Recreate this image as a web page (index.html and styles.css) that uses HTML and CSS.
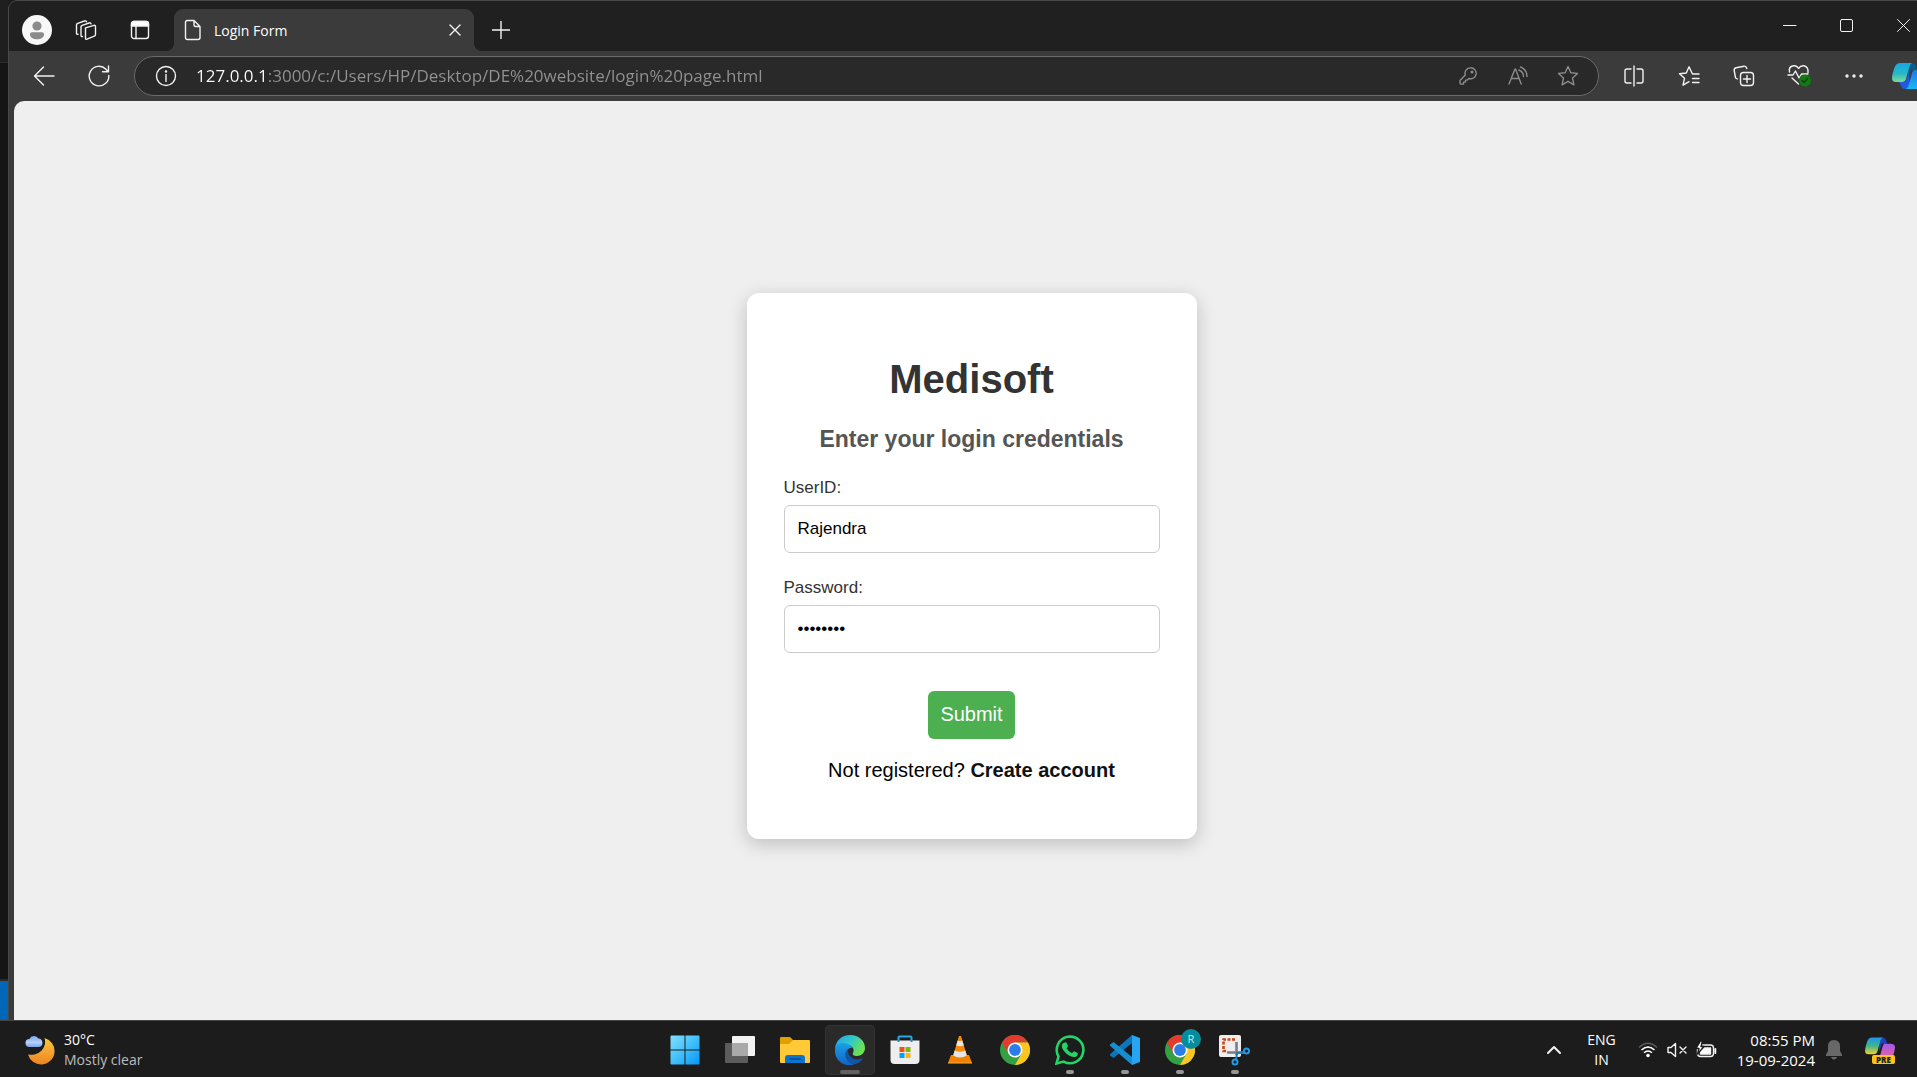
FILE: index.html
```html
<!DOCTYPE html>
<html lang="en">
<head>
<meta charset="utf-8">
<meta name="viewport" content="width=device-width, initial-scale=1">
<title>Login Form</title>
<link rel="stylesheet" href="styles.css">
</head>
<body>
<div class="desktop">
  <div class="backdrop"><div class="backdrop-top"></div><div class="backdrop-mid"></div><div class="backdrop-status"></div></div>
  <div class="window">
    <header class="tabbar">
      <button class="avatar" aria-label="Profile">
        <svg width="30" height="30" viewBox="0 0 30 30"><circle cx="15" cy="15" r="15" fill="#f8f8f8"/><circle cx="15" cy="11" r="4.6" fill="#8b8b8b"/><path d="M8 19.2c0-1.100.9-2 2-2h10c1.100 0 2 .9 2 2 0 3.200-3 5-7 5s-7-1.800-7-5z" fill="#8b8b8b"/></svg>
      </button>
      <button class="icon-btn" aria-label="Workspaces">
        <svg width="22" height="22" viewBox="0 0 22 22" class="line"><path d="M10.500 8.800 19 6.300q1.500-.3 1.500 1.200v8q0 1.200-1.200 1.700l-7.300 3q-1.500.5-1.500-1z"/><path d="M7.500 17.500q-1.500.4-1.500-1.200V8q0-1.300 1.200-1.700L14 4q1.700-.5 2 .8"/><path d="M3 15.300q-1.500.3-1.500-1.200V6q0-1.300 1.200-1.700L9.500 2q1.600-.5 2 .8"/></svg>
      </button>
      <button class="icon-btn" aria-label="Tab actions">
        <svg width="20" height="20" viewBox="0 0 20 20" class="line"><rect x="1.500" y="1.500" width="17" height="17" rx="2.500"/><path d="M1.500 4q0-2.500 2.500-2.500h12q2.500 0 2.500 2.500v2h-17z" fill="#fff"/><path d="M6 6v12"/></svg>
      </button>
      <div class="tab">
        <svg width="18" height="22" viewBox="0 0 18 22" class="line"><path d="M3.500 1.500H10l6 6v11q0 2-2 2H3.500q-2 0-2-2v-15q0-2 2-2zM10 1.500v4.500q0 1.500 1.500 1.500H16"/></svg>
        <span class="tab-title">Login Form</span>
        <button class="tab-close" aria-label="Close tab"><svg width="12" height="12" viewBox="0 0 12 12" class="line"><path d="M1 1l10 10M11 1 1 11"/></svg></button>
      </div>
      <button class="new-tab" aria-label="New tab"><svg width="18" height="18" viewBox="0 0 18 18" class="line"><path d="M9 0v18M0 9h18"/></svg></button>
      <div class="window-controls">
        <button aria-label="Minimize"><svg width="14" height="14" viewBox="0 0 14 14" class="thin"><path d="M0 6.500h13"/></svg></button>
        <button aria-label="Maximize"><svg width="14" height="14" viewBox="0 0 14 14" class="thin"><rect x=".5" y=".5" width="12" height="12" rx="1.500"/></svg></button>
        <button aria-label="Close"><svg width="14" height="14" viewBox="0 0 14 14" class="thin"><path d="M.5.5l12 12M12.500.5l-12 12"/></svg></button>
      </div>
    </header>
    <nav class="toolbar">
      <button class="icon-btn" aria-label="Back"><svg width="22" height="22" viewBox="0 0 22 22" class="line"><path d="M21 11H1.500M10.500 2 1.500 11l9 9"/></svg></button>
      <button class="icon-btn" aria-label="Refresh"><svg width="22" height="22" viewBox="0 0 22 22" class="line"><path d="M20.800 10.500A9.800 9.800 0 1 1 18 4.200l2 2.300M20.500 1v5.800h-6"/></svg></button>
      <div class="address">
        <button class="site-info" aria-label="Site information"><svg width="22" height="22" viewBox="0 0 22 22" class="line"><circle cx="11" cy="11" r="9.500"/><path d="M11 9.500v7"/><circle cx="11" cy="6.500" r=".6" fill="#fff"/></svg></button>
        <input class="url" type="text" aria-label="Address" value="127.0.0.1:3000/c:/Users/HP/Desktop/DE%20website/login%20page.html">
        <div class="address-actions">
          <button class="icon-btn" aria-label="Passwords"><svg width="18" height="18" viewBox="0 0 18 18" class="dim"><path d="M11.500.8a5.500 5.500 0 0 0-5.200 7.300L1 13.400v2.700q0 1 1 1h2.500v-2h2v-2h1.700l1.700-1.600A5.500 5.500 0 1 0 11.500.8z"/><circle cx="13" cy="5" r=".8"/></svg></button>
          <button class="icon-btn" aria-label="Read aloud"><svg width="22" height="20" viewBox="0 0 22 20" class="dim"><path d="M2 18 8 3h.5l5.700 15M4.200 12.500h8"/><path d="M13.500 1q6.500 2.500 6.500 9.500M11.800 4q4.700 1.800 4.700 6.500"/></svg></button>
          <button class="icon-btn" aria-label="Add to favorites"><svg width="22" height="22" viewBox="0 0 22 22" class="dim"><path d="m11 1.500 2.800 6.200 6.700.7-5 4.600 1.400 6.800L11 16.300l-5.900 3.500L6.500 13l-5-4.600 6.700-.7z"/></svg></button>
        </div>
      </div>
      <button class="icon-btn" aria-label="Split screen"><svg width="22" height="22" viewBox="0 0 22 22" class="line"><path d="M11 1v20M8 4H4Q2 4 2 6v10q0 2 2 2h4M14 4h4q2 0 2 2v10q0 2-2 2h-4"/></svg></button>
      <button class="icon-btn" aria-label="Favorites"><svg width="22" height="22" viewBox="0 0 22 22" class="line"><path d="M21 9h-6.500L11 1.800 8.300 8 1.500 8.800l5 4.500-1.500 6.900 6-3.500M14.500 13.500H21M14.500 17.500H21"/></svg></button>
      <button class="icon-btn" aria-label="Collections"><svg width="22" height="22" viewBox="0 0 22 22" class="line"><rect x="7.500" y="7.500" width="13" height="13" rx="3"/><path d="M14 10.500v7M10.500 14h7M4.500 14 2.600 13 1.200 5.500q-.3-2.200 1.800-2.700l8-1.600q2.200-.3 2.800 2.300"/></svg></button>
      <button class="icon-btn" aria-label="Browser essentials"><svg width="26" height="24" viewBox="0 0 26 24" class="line"><path d="M3.500 8Q2.500 3 6.500 2t6 2.500Q15 1 18.700 2T22 8.500M2 11h5l2.500-4 3.500 7 2.500-4H22M6 14l6.500 6"/><circle cx="19" cy="16.500" r="6" fill="#0f7b10" stroke="none"/><path d="m16 16.500 2 2 3.700-4" stroke="#173b17"/></svg></button>
      <button class="icon-btn" aria-label="Settings and more"><svg width="20" height="20" viewBox="0 0 20 20" fill="#eee"><circle cx="3" cy="10" r="1.700"/><circle cx="10" cy="10" r="1.700"/><circle cx="17" cy="10" r="1.700"/></svg></button>
      <button class="icon-btn" aria-label="Copilot"><svg width="34" height="28" viewBox="0 0 34 28">
        <defs><linearGradient id="cpA" x1="0" y1="0" x2="0" y2="1"><stop offset="0" stop-color="#18a5e4"/><stop offset=".55" stop-color="#27b9c7"/><stop offset="1" stop-color="#7fdc92"/></linearGradient><linearGradient id="cpB" x1="0" y1="0" x2="0" y2="1"><stop offset="0" stop-color="#2474e8"/><stop offset="1" stop-color="#18b8f5"/></linearGradient></defs>
        <path d="M16 1h4q3 0 4 3l1 4h-6l-3 9z" fill="#075f8e"/><path d="M8 1h12q-2 1-3 5l-3 11q-1 3-4 3H4q-4 0-4-4 0-3 2-9 1.500-6 6-6z" fill="url(#cpA)"/><path d="M7 20h5q2-1 3-4l2-6 1 17h-5q-3 0-4-3z" fill="#2159e0"/><path d="M22 8h7q5 0 5 4 0 3-2 9-1.500 6-6 6H14q2-1 3-5l3-11q.5-2 2-3z" fill="url(#cpB)"/></svg></button>
    </nav>
    <main class="page">
      <form class="card">
        <h1>Medisoft</h1>
        <h2>Enter your login credentials</h2>
        <div class="field">
          <label for="user">UserID:</label>
          <input id="user" type="text" value="Rajendra">
        </div>
        <div class="field">
          <label for="pass">Password:</label>
          <input id="pass" type="password" value="password">
        </div>
        <button class="submit" type="button">Submit</button>
        <p>Not registered? <a href="#register">Create account</a></p>
      </form>
    </main>
  </div>
</div>
<footer class="taskbar">
  <div class="weather">
    <svg width="30" height="30" viewBox="0 0 30 30"><defs><linearGradient id="moon" x1="0" y1="0" x2="0" y2="1"><stop offset="0" stop-color="#fbc83d"/><stop offset="1" stop-color="#ed8323"/></linearGradient><linearGradient id="cloud" x1="0" y1="0" x2="0" y2="1"><stop offset="0" stop-color="#7da8f2"/><stop offset=".6" stop-color="#b5d0fb"/><stop offset="1" stop-color="#7ba4ea"/></linearGradient></defs><path d="M19.500 3A14 13 0 0 1 3 19.500 13.500 13.500 0 1 0 19.500 3z" fill="url(#moon)"/><path d="M4.500 12a4 4 0 0 1 0-8 5 5 0 0 1 9-.5 4.300 4.300 0 0 1 .5 8.500z" fill="url(#cloud)"/></svg>
    <div class="weather-text"><span>30°C</span><span class="muted">Mostly clear</span></div>
  </div>
  <div class="apps">
    <button aria-label="Start"><svg width="30" height="30" viewBox="0 0 30 30"><defs><linearGradient id="win" x1="0" y1="0" x2="1" y2="1"><stop offset="0" stop-color="#82e0fd"/><stop offset=".5" stop-color="#42c0fb"/><stop offset="1" stop-color="#0795f7"/></linearGradient></defs><path d="M1.500.5h13v14H.5v-13q0-1 1-1zM15.500.5h13q1 0 1 1v13h-14zM.5 15.500h14v14h-13q-1 0-1-1zM15.500 15.500h14v13q0 1-1 1h-13z" fill="url(#win)"/></svg></button>
    <button aria-label="Task view"><svg width="30" height="30" viewBox="0 0 30 30"><rect y="8" width="23" height="20" rx="1" fill="#5c5c5c"/><rect x="7" y="1" width="23" height="20" rx="1" fill="#f2f2f2"/><path d="M7 8h16v13H7z" fill="#a9a9a9"/></svg></button>
    <button aria-label="File Explorer"><svg width="30" height="30" viewBox="0 0 30 30"><path d="M0 3q0-1 1-1h9l4 4h-2v6H0z" fill="#dfa000"/><path d="M0 9h9l4-4h16q1 0 1 1v21q0 1-1 1H1q-1 0-1-1z" fill="#ffca36"/><path d="M5 28v-5q0-3 3-3h14q3 0 3 3v5z" fill="#0d74ce"/><path d="M9 24h12" stroke="#06498d" stroke-width="1.500"/></svg></button>
    <button class="running current" aria-label="Microsoft Edge"><svg width="30" height="30" viewBox="0 0 30 30"><defs><linearGradient id="edA" x1="0" y1="0" x2="1" y2=".5"><stop offset="0" stop-color="#2b9be8"/><stop offset=".5" stop-color="#2dc6d0"/><stop offset="1" stop-color="#6de34e"/></linearGradient><linearGradient id="edB" x1="0" y1="0" x2="0" y2="1"><stop offset="0" stop-color="#1ba0e8"/><stop offset="1" stop-color="#1263c4"/></linearGradient></defs><path d="M0 14C1 5 7 0 15 0c9 0 15 6 15 13 0 5-4 8-8 8-3 0-5-1-4-3 2-4-1-8-6-8-5-1-9 1-12 4z" fill="url(#edA)"/><path d="M0 16C0 10 4 8 8 8c5 0 9 3 9 5-5-1-7 5-4 10 1 3 3 5 6 7C8 32 0 25 0 16z" fill="url(#edB)"/><path d="M13 14c-4 3-4 10 2 14 6 3 11-1 13-5-8 4-16-1-15-9z" fill="#0f56a5"/></svg></button>
    <button aria-label="Microsoft Store"><svg width="30" height="30" viewBox="0 0 30 30"><path d="M8.500 7V2.500q0-1 1-1h11q1 0 1 1V7" fill="none" stroke="#27a7e5" stroke-width="2"/><path d="M.5 5.500h29V25q0 4-4 4h-21q-4 0-4-4z" fill="#eee"/><path d="M8.500 5v2M21.500 5v2" stroke="#1b86c4" stroke-width="2"/><path d="M9.500 12h5v5h-5z" fill="#f25022"/><path d="M15.500 12h5v5h-5z" fill="#7fba00"/><path d="M9.500 18h5v5h-5z" fill="#00a4ef"/><path d="M15.500 18h5v5h-5z" fill="#ffb900"/></svg></button>
    <button aria-label="VLC media player"><svg width="26" height="30" viewBox="0 0 26 30"><path d="M4 20h18l3 8H1z" fill="#f28200"/><path d="m12 1h2l6 20q-7 4-14 0z" fill="#f58a0b"/><path d="m10.700 5.500-1.500 5q3.800 1.500 7.600 0l-1.500-5q-2.300 1-4.600 0zM7.700 15.500l-1.500 5q6.800 4 13.600 0l-1.500-5q-5.300 2.500-10.600 0z" fill="#e6e6e6"/><path d="M1 28h24" stroke="#ffb13b"/></svg></button>
    <button aria-label="Google Chrome"><svg width="30" height="30" viewBox="0 0 30 30"><g id="chrome"><circle cx="15" cy="15" r="15" fill="#34a044"/><path d="M2 7.500A15 15 0 0 1 28 7.500H15L8.500 18.700z" fill="#e33b2e"/><path d="M28 7.500A15 15 0 0 1 15 30l6.500-11.300L15 7.500z" fill="#fcc622"/><circle cx="15" cy="15" r="7.500" fill="#fff"/><circle cx="15" cy="15" r="5.900" fill="#2b7de9"/></g></svg></button>
    <button class="running" aria-label="WhatsApp"><svg width="30" height="30" viewBox="0 0 30 30"><path d="M1.500 28.500 3.500 21.500A13.300 13.300 0 1 1 8.700 26.600z" fill="none" stroke="#25d366" stroke-width="2.600"/><path d="M10 7.500q1.300-.5 1.800.7l1 2.400q.3.800-.3 1.500l-1 1.200q2 3.500 5.500 5l1.300-1.600q.6-.7 1.300-.3l2.600 1.300q.8.400.6 1.200-.8 3.200-4.300 3.200-4.500-.3-8.700-5t-2.500-8q1-1.200 2.700-1.600z" fill="#25d366"/></svg></button>
    <button class="running" aria-label="Visual Studio Code"><svg width="30" height="30" viewBox="0 0 30 30"><path d="M22 0v8L3.500 23 0 20.500v-1.200z" fill="#0b76bb"/><path d="M0 9.500 3.500 7 22 22v8L0 10.700z" fill="#188ed2"/><path d="M22 0l8 3v24l-8 3z" fill="#27a5f0"/></svg></button>
    <button class="running" aria-label="Google Chrome, profile R"><svg width="30" height="30" viewBox="0 0 30 30"><use href="#chrome"/></svg><span class="badge">R</span></button>
    <button class="running" aria-label="Snipping Tool"><svg width="32" height="32" viewBox="0 0 32 32"><rect x="0" y="1" width="22" height="22" rx="2" fill="#eee"/><path d="M16 5.500H4.500V17h4" fill="none" stroke="#d04312" stroke-width="2.600" stroke-dasharray="3 1.500"/><path d="M17.500 8v13M8 18.500h17" stroke="#777e86" stroke-width="2.600"/><path d="M18 19l-1 7M18 19l8-1" stroke="#147bc1" stroke-width="2"/><circle cx="16" cy="28" r="2.500" fill="none" stroke="#219be5" stroke-width="2"/><circle cx="27.500" cy="17" r="2.500" fill="none" stroke="#219be5" stroke-width="2"/></svg></button>
  </div>
  <div class="tray">
    <button class="chevron" aria-label="Show hidden icons"><svg width="14" height="10" viewBox="0 0 14 10" class="bold"><path d="m1 8 6-6 6 6"/></svg></button>
    <button class="lang"><span>ENG</span><span>IN</span></button>
    <button class="status" aria-label="Network, volume and battery">
      <svg width="20" height="18" viewBox="0 0 20 18" fill="none" stroke-width="1.500"><path d="M1 6.500q9-8.500 18 0" stroke="#5a5a5a"/><path d="M3.500 9q6.500-6 13 0M6 11.700q4-3.500 8 0" stroke="#fff"/><circle cx="10" cy="14.500" r="1.800" fill="#fff"/></svg>
      <svg width="20" height="16" viewBox="0 0 20 16" class="line"><path d="M1 5.500h3L8.500 1.500v13L4 10.500H1zM13 5l6 6M19 5l-6 6"/></svg>
      <svg width="21" height="18" viewBox="0 0 21 18" class="line"><rect x="1.500" y="4" width="16" height="11.500" rx="3"/><path d="M4.500 7h10v6h-10z" fill="#fff"/><path d="M19.300 8v4" stroke-width="2"/><path d="M4.500 0 0 7.500h3L1.500 13 8 5.500H5L6.500 0z" fill="#fff" stroke="#1c1c1c"/></svg>
    </button>
    <button class="clock"><span>08:55 PM</span><span>19-09-2024</span></button>
    <button class="bell" aria-label="Notifications"><svg width="16" height="20" viewBox="0 0 16 20" fill="#686868"><path d="M8 0q6 0 6 6.500V11l2 3.500V16H0v-1.500L2 11V6.500Q2 0 8 0zM5 17h6q-1 2.500-3 2.500T5 17z"/></svg></button>
    <button class="copilot" aria-label="Copilot preview">
      <svg width="30" height="26" viewBox="0 0 34 28"><defs><linearGradient id="cpC" x1="0" y1="0" x2="0" y2="1"><stop offset="0" stop-color="#1b94f0"/><stop offset=".5" stop-color="#41b58a"/><stop offset="1" stop-color="#f4d12a"/></linearGradient><linearGradient id="cpD" x1="0" y1="0" x2="0" y2="1"><stop offset="0" stop-color="#a159ee"/><stop offset="1" stop-color="#f5648b"/></linearGradient></defs><path d="M16 1h4q3 0 4 3l1 4h-6l-3 9z" fill="#2040b8"/><path d="M8 1h12q-2 1-3 5l-3 11q-1 3-4 3H4q-4 0-4-4 0-3 2-9 1.500-6 6-6z" fill="url(#cpC)"/><path d="M22 8h7q5 0 5 4 0 3-2 9-1.500 6-6 6H14q2-1 3-5l3-11q.5-2 2-3z" fill="url(#cpD)"/></svg>
      <span class="pre">PRE</span>
    </button>
  </div>
</footer>
</body>
</html>
```
FILE: styles.css
```css
* { box-sizing: border-box; }
html, body { height: 100%; margin: 0; }
body {
  display: grid;
  grid-template-rows: 1fr auto;
  overflow: hidden;
  background: #1c1c1c;
  color: #fff;
  font-family: "Open Sans", "Noto Sans", sans-serif;
  font-size: 14px;
}
button {
  display: flex;
  align-items: center;
  justify-content: center;
  padding: 0;
  border: 0;
  background: none;
  color: inherit;
  font: inherit;
}
svg { flex: none; display: block; }
.line, .dim, .thin, .bold { fill: none; stroke: #f2f2f2; stroke-width: 1.4; stroke-linejoin: round; stroke-linecap: round; }
.dim { stroke: #8c8c8c; }
.thin { stroke-width: 1; }
.bold { stroke-width: 2; }

.desktop { display: flex; min-height: 0; overflow: hidden; }
.backdrop { flex: none; width: 8px; display: flex; flex-direction: column; }
.backdrop-top { height: 63px; background: #1f1f1f; border-bottom: 1px solid #2b2b2b; }
.backdrop-mid { flex: 1; background: #151515; border-bottom: 2px solid #2b2b2b; }
.backdrop-status { height: 39px; background: #0067b8; }

/* The window runs a little past the right edge of the desktop. */
.window {
  flex: 1;
  min-width: 0;
  margin-right: -13px;
  display: flex;
  flex-direction: column;
  border: 1px solid #484848;
  border-bottom: 0;
  border-radius: 9px 0 0 0;
  background: #3b3b3b;
  overflow: hidden;
}
.tabbar { display: flex; align-items: center; gap: 14px; height: 50px; padding-left: 13px; background: #202020; }
.avatar { margin-top: 8px; }
.icon-btn { flex: none; width: 40px; height: 36px; }
.tabbar > .icon-btn, .new-tab { margin-top: 8px; }
.tab {
  position: relative;
  align-self: flex-end;
  display: flex;
  align-items: center;
  gap: 12px;
  width: 300px;
  height: 42px;
  padding: 0 13px 0 10px;
  border-radius: 9px 9px 0 0;
  background: #3b3b3b;
}
.tab::before, .tab::after { content: ""; position: absolute; bottom: 0; width: 8px; height: 8px; }
.tab::before { left: -8px; background: radial-gradient(circle at 0 0, #202020 8px, #3b3b3b 8px); }
.tab::after { right: -8px; background: radial-gradient(circle at 100% 0, #202020 8px, #3b3b3b 8px); }
.tab-title { flex: 1; }
.new-tab { width: 26px; height: 28px; }
.window-controls { display: flex; gap: 7px; margin-left: auto; }
.window-controls button { width: 50px; height: 48px; }

.toolbar { display: flex; align-items: center; gap: 15px; height: 50px; padding: 0 0 0 15px; }
.address {
  flex: 1;
  min-width: 0;
  display: flex;
  align-items: center;
  gap: 19px;
  height: 40px;
  padding: 0 10px 0 20px;
  border: 1px solid #6b6b6b;
  border-radius: 20px;
  background: #292929;
}
.url {
  flex: 1;
  min-width: 0;
  padding: 0;
  border: 0;
  outline: 0;
  background: linear-gradient(90deg, #fff 70px, #929292 70px);
  -webkit-background-clip: text;
  background-clip: text;
  color: transparent;
  font-family: inherit;
  font-size: 17px;
  line-height: 24px;
}
.address-actions { display: flex; gap: 10px; }

.page {
  flex: 1;
  min-height: 0;
  display: flex;
  align-items: center;
  justify-content: center;
  margin-left: 5px;
  padding-top: 11px;
  border-radius: 10px 0 0 0;
  background: #efefef;
  font-family: "Liberation Sans", Arial, sans-serif;
}
.card {
  width: 450px;
  padding: 63px 37px 57px;
  border-radius: 12px;
  background: #fff;
  box-shadow: 0 5px 19px rgba(0, 0, 0, .2);
  color: #000;
  text-align: center;
}
h1 { margin: 0 0 24px; color: #333; font-size: 40px; line-height: 46px; }
h2 { margin: 0 0 26px; color: #555; font-size: 23px; line-height: 26px; }
.field { margin-bottom: 25px; text-align: left; }
.field label { display: block; margin-bottom: 7px; color: #333; font-size: 17px; line-height: 20px; }
.field input {
  display: block;
  width: 100%;
  height: 48px;
  padding: 0 13px;
  border: 1px solid #ccc;
  border-radius: 6px;
  background: #fff;
  color: #000;
  font-family: inherit;
  font-size: 17px;
}
.submit {
  height: 48px;
  margin: 38px auto 20px;
  padding: 0 12px 2px;
  border-radius: 6px;
  background: #4caf50;
  color: #fff;
  font-size: 20px;
}
.card p { margin: 0; font-size: 20px; line-height: 23px; }
.card a { color: #111; font-weight: bold; text-decoration: none; }

.taskbar {
  display: grid;
  grid-template-columns: 1fr auto 1fr;
  align-items: center;
  height: 57px;
  margin-right: -3px;
  padding-top: 2px;
  border-top: 1px solid #444;
  background: #1c1c1c;
}
.weather { display: flex; align-items: center; gap: 9px; padding-left: 25px; }
.weather-text { display: flex; flex-direction: column; line-height: 20px; }
.muted { color: #bdbdbd; }
.apps { display: flex; gap: 5px; }
.apps button { position: relative; width: 50px; height: 50px; border-radius: 5px; }
.apps .current { background: #2a2a2a; box-shadow: inset 0 0 0 1px #333; }
.running::after {
  content: "";
  position: absolute;
  bottom: 1px;
  left: 50%;
  width: 8px;
  height: 4px;
  margin-left: -4px;
  border-radius: 2px;
  background: #969696;
}
.current::after { width: 20px; margin-left: -10px; background: #626262; }
.badge {
  position: absolute;
  top: 4px;
  right: 4px;
  width: 20px;
  border-radius: 50%;
  background: #078c9b;
  color: #c8e7eb;
  font-size: 11px;
  line-height: 20px;
}
.tray { display: flex; align-items: center; justify-content: flex-end; padding-right: 25px; line-height: 20px; }
.lang, .clock { flex-direction: column; }
.lang { margin: 0 22px 0 26px; align-items: center; }
.status { gap: 9px; margin-right: 20px; }
.clock { align-items: flex-end; margin-right: 11px; font-size: 15px; }
.bell { margin-right: 23px; }
.copilot { position: relative; width: 30px; height: 28px; align-items: flex-start; }
.pre {
  position: absolute;
  right: 0;
  bottom: 0;
  width: 23px;
  border-radius: 2px;
  background: #fcc419;
  color: #222;
  font-size: 8px;
  font-weight: 800;
  line-height: 9px;
}
```
